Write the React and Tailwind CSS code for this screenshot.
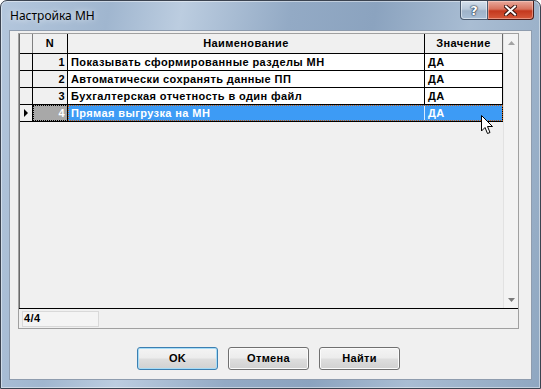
import React from 'react';

const rows = [
  { n: 1, name: 'Показывать сформированные разделы МН', value: 'ДА' },
  { n: 2, name: 'Автоматически сохранять данные ПП', value: 'ДА' },
  { n: 3, name: 'Бухгалтерская отчетность в один файл', value: 'ДА' },
  { n: 4, name: 'Прямая выгрузка на МН', value: 'ДА' }
];

function GridRow({ row, selected }) {
  return (
    <div className="flex h-[17px] border-b border-black">
      <div className="w-[13px] border-r border-black bg-[#f0f0f0] flex items-center justify-center">
        {selected && (
          <svg width="5" height="8" viewBox="0 0 5 8">
            <path d="M0 0 L4 4 L0 8 Z" fill="#000" />
          </svg>
        )}
      </div>
      <div
        className={`w-[35px] border-r border-black flex items-center justify-end pr-[2px] ${
          selected ? 'bg-[#a8a8a8] text-white outline outline-1 outline-dotted outline-black -outline-offset-1' : 'bg-[#f0f0f0] text-black'
        }`}>
        {row.n}
      </div>
      {selected ? (
        <div className="flex outline outline-1 outline-dotted outline-[#c0601a] -outline-offset-1 bg-[#3d9bf5] text-white">
          <div className="w-[357px] border-r border-[#d6eaff] flex items-center pl-[3px]">{row.name}</div>
          <div className="w-[78px] border-r border-black flex items-center pl-[3px]">{row.value}</div>
        </div>
      ) : (
        <>
          <div className="w-[357px] border-r border-black bg-white flex items-center pl-[3px]">{row.name}</div>
          <div className="w-[78px] border-r border-black bg-white flex items-center pl-[3px]">{row.value}</div>
        </>
      )}
    </div>
  );
}

function WinButton({ children, isDefault }) {
  return (
    <button
      className={`w-[81px] h-[23px] rounded-[3px] border flex items-center justify-center text-black font-bold text-[11px] tracking-[0.3px] bg-[linear-gradient(to_bottom,#f4f4f4_0%,#ececec_48%,#dedede_52%,#d1d1d1_100%)] ${
        isDefault
          ? 'border-[#3c7fb1] shadow-[inset_0_0_0_1px_#a6dcf7]'
          : 'border-[#707070] shadow-[inset_0_0_0_1px_#fbfbfb]'
      }`}>
      {children}
    </button>
  );
}

export default function App() {
  return (
    <div className="w-[541px] h-[389px] bg-white font-['Liberation_Sans',Arial,sans-serif]">
      <div className="relative w-[541px] h-[389px] rounded-t-[7px] border border-[#3b4350] flex flex-col bg-[linear-gradient(100deg,#b4c7dd_0%,#a0b6cf_18%,#bccde0_30%,#93aac5_48%,#8ba3bf_62%,#a9bdd3_78%,#8fa7c1_100%)] shadow-[inset_0_0_0_1px_rgba(255,255,255,0.45)]">
        {/* title bar */}
        <div className="h-[29px] flex items-start">
          <span className="pl-[9px] pt-[7px] text-[12px] leading-[16px] text-black font-['Noto_Sans',sans-serif] [text-shadow:0_0_6px_rgba(255,255,255,0.9)]">
            Настройка МН
          </span>
          <div className="ml-auto mr-[6px] flex">
            <div className="w-[28px] h-[19px] rounded-bl-[4px] border border-t-0 border-[#4a5a6e] bg-[linear-gradient(to_bottom,#d5e0ec_0%,#b9c9da_45%,#9fb3c9_55%,#a9bfd6_100%)] shadow-[inset_0_0_0_1px_rgba(255,255,255,0.5)] flex items-center justify-center">
              <span className="text-white font-bold text-[13px] leading-none font-['DejaVu_Sans',sans-serif] [text-shadow:0_0_1px_#1e2e44,0_0_1px_#1e2e44,0_0_2px_#1e2e44]">
                ?
              </span>
            </div>
            <div className="w-[46px] h-[19px] rounded-br-[4px] border border-t-0 border-l-0 border-[#4f1e1a] bg-[linear-gradient(to_bottom,#e9a99c_0%,#d8725d_45%,#c4381e_55%,#d6593b_100%)] shadow-[inset_0_0_0_1px_rgba(255,220,210,0.45)] flex items-center justify-center">
              <svg width="13" height="11" viewBox="0 0 13 11">
                <path d="M2 1.5 L11 9.5 M11 1.5 L2 9.5" stroke="#3a1410" strokeWidth="4" strokeLinecap="square" />
                <path d="M2 1.5 L11 9.5 M11 1.5 L2 9.5" stroke="#fff" strokeWidth="2" strokeLinecap="square" />
              </svg>
            </div>
          </div>
        </div>

        {/* body */}
        <div className="flex-1 flex px-[8px] pb-[8px]">
          <div className="flex-1 bg-[#f0f0f0] border border-[#8e9cae] flex flex-col">
            <div className="ml-[8px] mt-[2px] w-[501px] h-[296px] border border-[#a0a0a0] flex flex-col text-[11px] font-bold leading-none tracking-[0.4px]">
              {/* grid */}
              <div className="h-[275px] flex border-b border-black">
                <div className="w-[484px] flex flex-col border-l border-[#6a6a6a] bg-[#f0f0f0]">
                  <div className="flex h-[20px] border-b border-black">
                    <div className="w-[13px] border-r border-[#808080] bg-[#f0f0f0]" />
                    <div className="w-[35px] border-r border-black flex items-center justify-center">N</div>
                    <div className="w-[357px] border-r border-black flex items-center justify-center">Наименование</div>
                    <div className="w-[78px] border-r border-[#6a6a6a] flex items-center justify-center">Значение</div>
                  </div>
                  {rows.map((r) => (
                    <GridRow key={r.n} row={r} selected={r.n === 4} />
                  ))}
                </div>
                <div className="w-[15px] flex flex-col justify-between bg-[#f3f3f3] border-l border-[#e2e2e2]">
                  <div className="h-[17px] flex items-center justify-center">
                    <svg width="7" height="4" viewBox="0 0 7 4">
                      <path d="M0 4 L3.5 0 L7 4 Z" fill="#a3a3a3" />
                    </svg>
                  </div>
                  <div className="h-[17px] flex items-center justify-center">
                    <svg width="7" height="4" viewBox="0 0 7 4">
                      <path d="M0 0 L3.5 4 L7 0 Z" fill="#7a7a7a" />
                    </svg>
                  </div>
                </div>
              </div>
              {/* status */}
              <div className="flex-1 flex items-center pl-[3px]">
                <div className="w-[77px] h-[16px] border border-[#d9d9d9] bg-[#f4f4f4] flex items-center pl-[1px] text-black">
                  4/4
                </div>
              </div>
            </div>

            <div className="mt-[18px] flex justify-center gap-[10px] pr-[4px]">
              <WinButton isDefault>OK</WinButton>
              <WinButton>Отмена</WinButton>
              <WinButton>Найти</WinButton>
            </div>
          </div>
        </div>

        {/* mouse pointer */}
        <svg className="absolute left-[480px] top-[114px]" width="13" height="20" viewBox="0 0 13 20">
          <path
            d="M0.5 0.5 L0.5 16 L4 12.5 L6.5 18.5 L9 17.5 L6.5 11.5 L11.5 11.5 Z"
            fill="#fff"
            stroke="#000"
            strokeWidth="1"
            strokeLinejoin="miter"
          />
        </svg>
      </div>
    </div>
  );
}
